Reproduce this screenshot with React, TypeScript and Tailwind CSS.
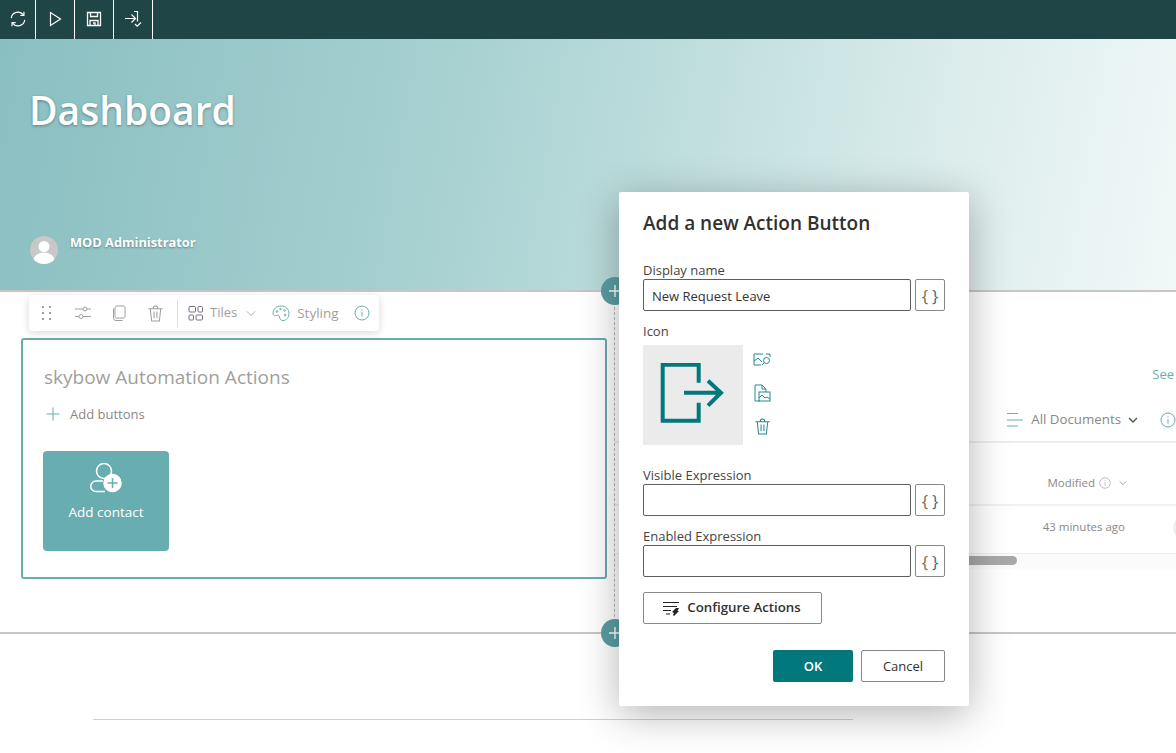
import React from "react";

const font = { fontFamily: '"Open Sans", "Noto Sans", sans-serif' };

function Ic({ s = 20, c, children, w = 1.2, vb = "0 0 20 20" }: { s?: number; c?: string; children: React.ReactNode; w?: number; vb?: string }) {
  return (
    <svg width={s} height={s} viewBox={vb} fill="none" stroke="currentColor" strokeWidth={w} className={"shrink-0 " + (c || "")}>
      {children}
    </svg>
  );
}

const Trash = ({ s = 18, c = "" }: { s?: number; c?: string }) => (
  <Ic s={s} c={c} w={1.1}>
    <path d="M2.5 5h15M4.5 5l1.4 13h8.2L15.5 5M7.5 5c0-4 5-4 5 0M8.5 8v7M11.5 8v7" />
  </Ic>
);

const Info = ({ s = 16, c = "" }: { s?: number; c?: string }) => (
  <Ic s={s} c={c} vb="0 0 16 16" w={1}>
    <circle cx="8" cy="8" r="7" />
    <path d="M8 7v4.5M8 4.4v1.2" />
  </Ic>
);

const Plus = () => (
  <Ic s={14} w={1.4} vb="0 0 14 14">
    <path d="M7 1v12M1 7h12" />
  </Ic>
);

const Field = ({ label, value }: { label: string; value?: string }) => (
  <div>
    <div className="text-[13px] leading-[18px] text-[#444]">{label}</div>
    <div className="flex gap-[4px]">
      <div className="w-[268px] h-[32px] border border-[#605e5c] rounded-[2px] px-[8px] pt-[3px] flex items-center text-[13px] text-[#333]">{value}</div>
      <div className="w-[30px] h-[32px] border border-[#8a8886] rounded-[2px] flex items-center justify-center text-[17px] font-normal gap-[4px] leading-none">
        <span className="text-[#7d6a50]">{"{"}</span>
        <span className="text-[#3f6f8c]">{"}"}</span>
      </div>
    </div>
  </div>
);

export default function App() {
  return (
    <div style={font} className="relative w-[1176px] h-[753px] overflow-hidden bg-white">
      {/* command bar */}
      <div className="h-[39px] bg-[#1f4547] flex text-white">
        <div className="w-[36px] border-r border-white flex items-center justify-center pb-[2px]">
          <Ic s={18} w={1.3}>
            <path d="M2.5 9a7.6 7.6 0 0 1 13.6-3.6M17.5 11a7.6 7.6 0 0 1-13.6 3.6" />
            <path d="M16.6 2v4h-4M3.4 18v-4h4" />
          </Ic>
        </div>
        <div className="w-[39px] border-r border-white flex items-center justify-center pb-[2px]">
          <Ic s={16} w={1.2} vb="0 0 16 16">
            <path d="M3.5 1.5v13L13.5 8z" />
          </Ic>
        </div>
        <div className="w-[39px] border-r border-white flex items-center justify-center pb-[2px]">
          <Ic s={16} w={1.3} vb="0 0 16 16">
            <path d="M1.5 1.5h13v13h-13zM4.5 1.5v4h7v-4M4 14.5v-5h8v5M7 12h2v2.5" />
          </Ic>
        </div>
        <div className="w-[39px] border-r border-white flex items-center justify-center pb-[2px]">
          <Ic s={18} w={1.2} vb="0 0 18 18">
            <path d="M1 8.5h10M7.5 4.5l4 4-4 4M10 1.5h3.5v10M11 14l2.2 2.2L17 12.5" />
          </Ic>
        </div>
      </div>

      {/* hero */}
      <div className="h-[253px] border-b-2 border-[#c8c6c4] bg-[linear-gradient(100deg,#8abfc1_0%,#a5cfd0_35%,#bcdcdc_55%,#dcedec_80%,#f1f8f8_100%)] pl-[30px] pt-[44px] text-white">
        <h1 className="-ml-[1px] text-[39px] leading-[54px] font-semibold [text-shadow:0_1px_3px_rgba(0,0,0,0.35)]">Dashboard</h1>
        <div className="flex mt-[96px] gap-[12px]">
          <div className="w-[28px] h-[28px] mt-[3px] rounded-full bg-[#c8c8c8] overflow-hidden shrink-0">
            <svg viewBox="0 0 28 28" width="28" height="28" fill="#fff">
              <circle cx="14" cy="10.5" r="5.5" />
              <ellipse cx="14" cy="24" rx="10.5" ry="7.5" />
            </svg>
          </div>
          <div className="text-[12.8px] leading-[18px] font-bold [text-shadow:0_1px_2px_rgba(0,0,0,0.35)]">MOD Administrator</div>
        </div>
      </div>

      {/* section */}
      <div className="relative flex h-[342px] border-b-2 border-[#c8c6c4]">
        <div className="w-[614px] pl-[21px] pt-[46px]">
          <div className="w-[586px] h-[241px] border-2 border-[#68adb0] rounded-[3px] px-[20px] pt-[23px]">
            <div className="ml-[1px] text-[19px] leading-[28px] text-[#a19f9d]">skybow Automation Actions</div>
            <div className="flex items-center gap-[10px] mt-[13px] pl-[3px] text-[13px] leading-[20px] text-[#8a8886]">
              <Ic s={14} c="text-[#68adb0]" w={1} vb="0 0 14 14">
                <path d="M7 .5v13M.5 7h13" />
              </Ic>
              Add buttons
            </div>
            <div className="mt-[27px] w-[126px] h-[100px] rounded-[4px] bg-[#68adb0] flex flex-col items-center pt-[11px] text-white">
              <svg width="32" height="32" viewBox="0 0 32 32" fill="none" stroke="currentColor" strokeWidth="1.5">
                <circle cx="14" cy="9" r="7.5" />
                <path d="M13 19H6a5.2 5.2 0 0 0 0 10.5h9" />
                <circle cx="22.5" cy="21" r="8.5" fill="#fff" stroke="#fff" />
                <path d="M22.5 16v10M17.5 21h10" stroke="#68adb0" />
              </svg>
              <div className="text-[13.5px] leading-[18px] mt-[9px]">Add contact</div>
            </div>
          </div>
        </div>
        <div className="flex-1 border-l border-dashed border-[#b8b8b8] overflow-hidden">
          <div className="flex justify-end mt-[72px] mr-[2px] text-[13px] leading-[20px] text-[#68adb0] whitespace-nowrap">See</div>
          <div className="flex justify-end items-center mt-[26px] h-[20px] text-[13.3px] text-[#8a8886]">
            <Ic s={18} c="text-[#68adb0] mr-[7px]" w={1.1} vb="0 0 18 18">
              <path d="M1 2.5h11M1 9h16M1 15h11" />
            </Ic>
            <span>All Documents</span>
            <Ic s={12} c="ml-[6px] mr-[21px] text-[#555]" w={1.4} vb="0 0 12 12">
              <path d="M2 4l4 4 4-4" />
            </Ic>
            <Info s={16} c="text-[#68adb0]" />
          </div>
          <div className="mt-[11px] h-[65px] border-b-2 border-t-2 border-t-[#eeeeee] border-b-[#f1f1f1] flex items-end pb-[13px] justify-end pr-[48px] text-[11.5px] font-medium text-[#8a8886]">
            Modified
            <Info s={12} c="ml-[4px] mb-[2px] text-[#a8a8a8]" />
            <Ic s={10} c="ml-[7px] mb-[3px] text-[#a8a8a8]" vb="0 0 12 12" w={1.2}>
              <path d="M2 4l4 4 4-4" />
            </Ic>
          </div>
          <div className="relative h-[48px] border-b border-[#eeeeee] flex items-center justify-end pr-[51px] pb-[6px] text-[11.5px] text-[#8a8886]">
            43 minutes ago
            <div className="absolute -right-[21px] top-[10px] w-[24px] h-[24px] rounded-full bg-[#eeeeee]"></div>
          </div>
          <div className="h-[15px] bg-[#fbfbfb] pt-[2px] pl-[100px]">
            <div className="w-[302px] h-[9px] rounded-full bg-[#a8a8a8]"></div>
          </div>
        </div>

        {/* section add-buttons */}
        <div className="absolute left-[601px] -top-[15px] w-[28px] h-[28px] rounded-full bg-[#5a9fa3] text-white flex items-center justify-center">
          <Plus />
        </div>
        <div className="absolute left-[601px] top-[327px] w-[28px] h-[28px] rounded-full bg-[#5a9fa3] text-white flex items-center justify-center">
          <Plus />
        </div>

        {/* webpart toolbar */}
        <div className="absolute left-[29px] top-[3px] w-[350px] h-[36px] bg-white rounded-[4px] shadow-[0_2px_8px_rgba(0,0,0,0.15)] flex items-center text-[#a19f9d] text-[13px]">
          <div className="w-[36px] flex justify-center">
            <svg width="12" height="16" viewBox="0 0 12 16" fill="#a19f9d">
              <rect x="1" y="1" width="2" height="2" />
              <rect x="8" y="1" width="2" height="2" />
              <rect x="1" y="7" width="2" height="2" />
              <rect x="8" y="7" width="2" height="2" />
              <rect x="1" y="13" width="2" height="2" />
              <rect x="8" y="13" width="2" height="2" />
            </svg>
          </div>
          <div className="w-[36px] flex justify-center">
            <Ic s={18} w={1} vb="0 0 18 18">
              <path d="M1 5h8M13 5h4M1 12.5h4M9 12.5h8" />
              <circle cx="11" cy="5" r="2" />
              <circle cx="7" cy="12.5" r="2" />
            </Ic>
          </div>
          <div className="w-[36px] flex justify-center">
            <Ic s={16} w={1} vb="0 0 16 16">
              <rect x="4" y="1" width="10" height="12" rx="1.5" />
              <path d="M2.5 3.5v9.5a2.5 2.5 0 0 0 2.5 2.5h6.5" />
            </Ic>
          </div>
          <div className="w-[36px] flex justify-center">
            <Trash s={19} />
          </div>
          <div className="w-px h-[28px] bg-[#e1dfdd] ml-[4px] mr-[10px]"></div>
          <Ic s={16} c="text-[#7a6a85]" w={1} vb="0 0 16 16">
            <rect x="1" y="1.5" width="6.5" height="5.5" rx="1" />
            <rect x="10" y="1.5" width="4.5" height="5.5" rx="1" />
            <rect x="1" y="10" width="4.5" height="5" rx="1" />
            <rect x="8" y="10" width="6.5" height="5" rx="1" />
          </Ic>
          <span className="ml-[6px]">Tiles</span>
          <Ic s={10} c="ml-[9px]" w={1} vb="0 0 12 12">
            <path d="M1 4l5 5 5-5" />
          </Ic>
          <Ic s={18} c="ml-[16px] text-[#68adb0]" w={1} vb="0 0 18 18">
            <path d="M9 2C4.5 2 1 5 1 9c0 3 2 3 3.5 2.5S7 11 7.5 13s1 3.5 3.5 3.5c3.5 0 6-3 6-7C17 5 13.5 2 9 2z" />
            <circle cx="5" cy="7.5" r=".8" />
            <circle cx="8.5" cy="5" r=".8" />
            <circle cx="12.5" cy="6.5" r=".8" />
            <circle cx="13" cy="11" r=".8" />
          </Ic>
          <span className="ml-[7px] text-[13.5px]">Styling</span>
          <Info s={16} c="ml-[15px] text-[#68adb0]" />
        </div>
      </div>

      {/* footer rule */}
      <div className="ml-[93px] mt-[85px] w-[760px] h-px bg-[#d2d0ce]"></div>

      {/* dialog */}
      <div className="absolute left-[619px] top-[192px] w-[350px] h-[514px] bg-white rounded-[2px] shadow-[0_8px_40px_rgba(0,0,0,0.3)] px-[24px] pt-[17px]">
        <div className="text-[19px] leading-[28px] font-semibold text-[#323130]">Add a new Action Button</div>
        <div className="mt-[24px]">
          <Field label="Display name" value="New Request Leave" />
        </div>
        <div className="text-[13px] leading-[18px] text-[#444] mt-[11px]">Icon</div>
        <div className="flex mt-[5px]">
          <div className="w-[100px] h-[100px] bg-[#ebebeb] flex items-center justify-center">
            <svg width="66" height="64" viewBox="0 0 66 64" fill="none" stroke="#03787c" strokeWidth="4">
              <path d="M38.7 19.7V1.7H2.7v56h36V39.7" />
              <path d="M24 29.7h37M48 17.7l13 12-13 13" />
            </svg>
          </div>
          <div className="flex flex-col items-center w-[38px] pt-[6px] gap-[15px] text-[#268a8e]">
            <Ic s={18} w={1} vb="0 0 18 18">
              <path d="M10 3H1v11h7M13 3h4v3M1 10l4-3 4 4M9 14l2-2" />
              <circle cx="13.5" cy="9.5" r="3" />
            </Ic>
            <Ic s={18} w={1} vb="0 0 18 18">
              <path d="M9 1H2v16h5M9 1l4 4v3M9 1v4h4" />
              <rect x="6" y="8" width="11" height="9" />
              <path d="M6 14l3-3 3 3 2-1 3 2" />
            </Ic>
            <Trash s={19} />
          </div>
        </div>
        <div className="mt-[21px]">
          <Field label="Visible Expression" />
        </div>
        <div className="mt-[11px]">
          <Field label="Enabled Expression" />
        </div>
        <div className="mt-[15px] w-[179px] h-[32px] border border-[#8a8886] rounded-[2px] flex items-center justify-center gap-[7px] text-[13.3px] font-semibold text-[#323130] pr-[2px]">
          <Ic s={18} w={1.1} c="text-[#222]" vb="0 0 18 18">
            <path d="M1 3.5h16M1 7.5h14M1 11.5h8M4 15h4" />
            <path d="M11 16l1-2-2-1 4-4h3l-1.5 3H17l-5 5z" fill="currentColor" stroke="none" />
          </Ic>
          Configure Actions
        </div>
        <div className="flex justify-end gap-[8px] mt-[26px]">
          <div className="w-[80px] h-[32px] rounded-[2px] bg-[#03787c] text-white text-[13px] font-semibold pt-[1px] flex items-center justify-center">OK</div>
          <div className="w-[84px] h-[32px] rounded-[2px] border border-[#8a8886] text-[#323130] text-[13px] font-medium pt-[1px] flex items-center justify-center">Cancel</div>
        </div>
      </div>
    </div>
  );
}
